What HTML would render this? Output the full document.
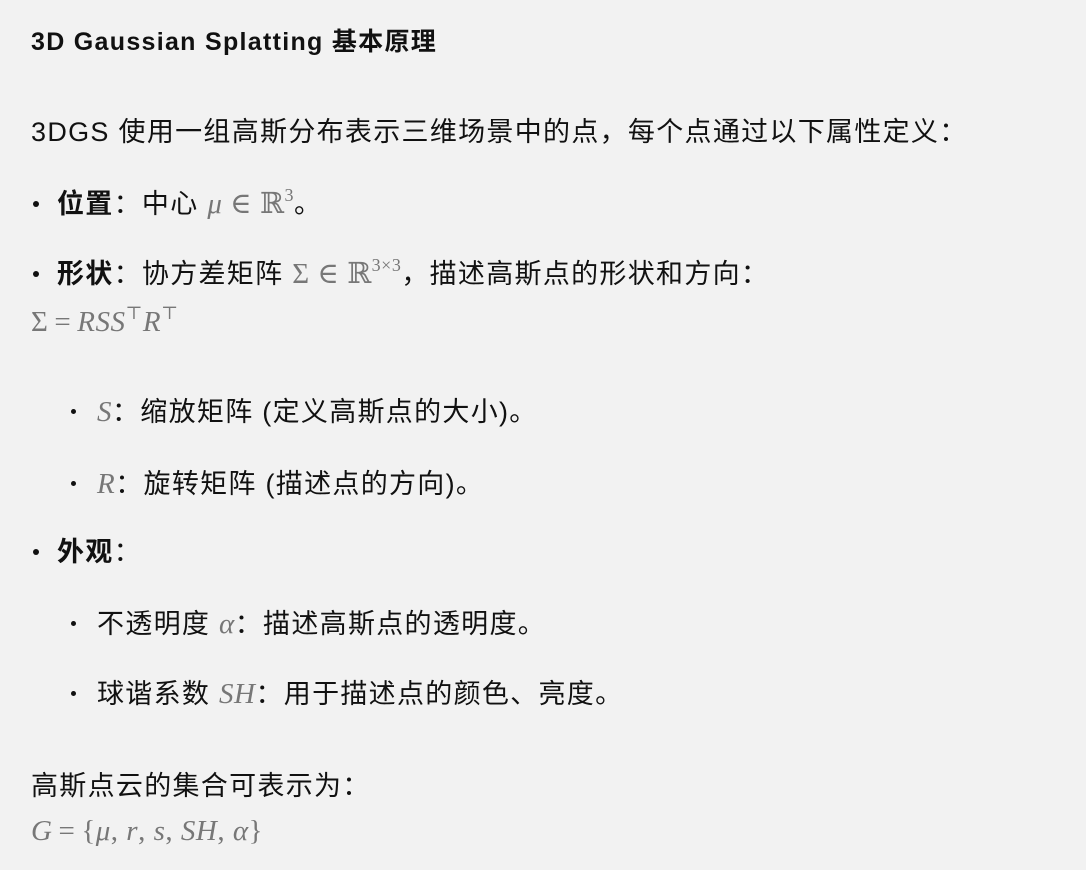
<!DOCTYPE html>
<html><head><meta charset="utf-8"><style>
body{margin:0;width:1086px;height:870px;background:#f2f2f2;position:relative;overflow:hidden;font-family:"Liberation Sans","Noto Sans CJK SC",sans-serif;color:#111;}
.l{position:absolute;left:31px;font-size:27px;letter-spacing:1.3px;line-height:32px;white-space:nowrap;}
.m{font-family:"Liberation Serif","DejaVu Serif",serif;color:#777;font-size:29px;letter-spacing:0.5px}
.i{font-style:italic}
.eq{margin:0 6px}
sup{font-size:18px;vertical-align:12px;line-height:0}
b{font-weight:bold}
.dot{position:absolute;left:0;top:13px;width:6px;height:6px;border-radius:50%;background:#111}
.b{left:57px}
.sb{left:97px}
</style></head><body>
<div class="l" style="top:26px;font-size:25px;font-weight:bold;letter-spacing:1.3px">3D Gaussian Splatting 基本原理</div>
<div class="l" style="top:116px">3DGS 使用一组高斯分布表示三维场景中的点，每个点通过以下属性定义：</div>
<div class="l b" style="top:188px"><span class="dot" style="left:-24px"></span><b>位置</b>：中心 <span class="m"><span class="i">μ</span> ∈ ℝ<sup>3</sup></span>。</div>
<div class="l b" style="top:258px"><span class="dot" style="left:-24px"></span><b>形状</b>：协方差矩阵 <span class="m">Σ ∈ ℝ<sup>3×3</sup></span>，描述高斯点的形状和方向：</div>
<div class="l m" style="top:306px">Σ<span class="eq">=</span><span class="i">RSS</span><sup>⊤</sup><span class="i">R</span><sup>⊤</sup></div>
<div class="l sb" style="top:396px"><span class="dot" style="left:-26px;width:5px;height:5px"></span><span class="m i">S</span>：缩放矩阵 (定义高斯点的大小)。</div>
<div class="l sb" style="top:468px"><span class="dot" style="left:-26px;width:5px;height:5px"></span><span class="m i">R</span>：旋转矩阵 (描述点的方向)。</div>
<div class="l b" style="top:536px"><span class="dot" style="left:-24px"></span><b>外观</b>：</div>
<div class="l sb" style="top:608px"><span class="dot" style="left:-26px;width:5px;height:5px"></span>不透明度 <span class="m i">α</span>：描述高斯点的透明度。</div>
<div class="l sb" style="top:678px"><span class="dot" style="left:-26px;width:5px;height:5px"></span>球谐系数 <span class="m i">SH</span>：用于描述点的颜色、亮度。</div>
<div class="l" style="top:770px">高斯点云的集合可表示为：</div>
<div class="l m" style="top:815px"><span class="i">G</span><span class="eq">=</span>{<span class="i">μ</span>, <span class="i">r</span>, <span class="i">s</span>, <span class="i">SH</span>, <span class="i">α</span>}</div>
</body></html>
